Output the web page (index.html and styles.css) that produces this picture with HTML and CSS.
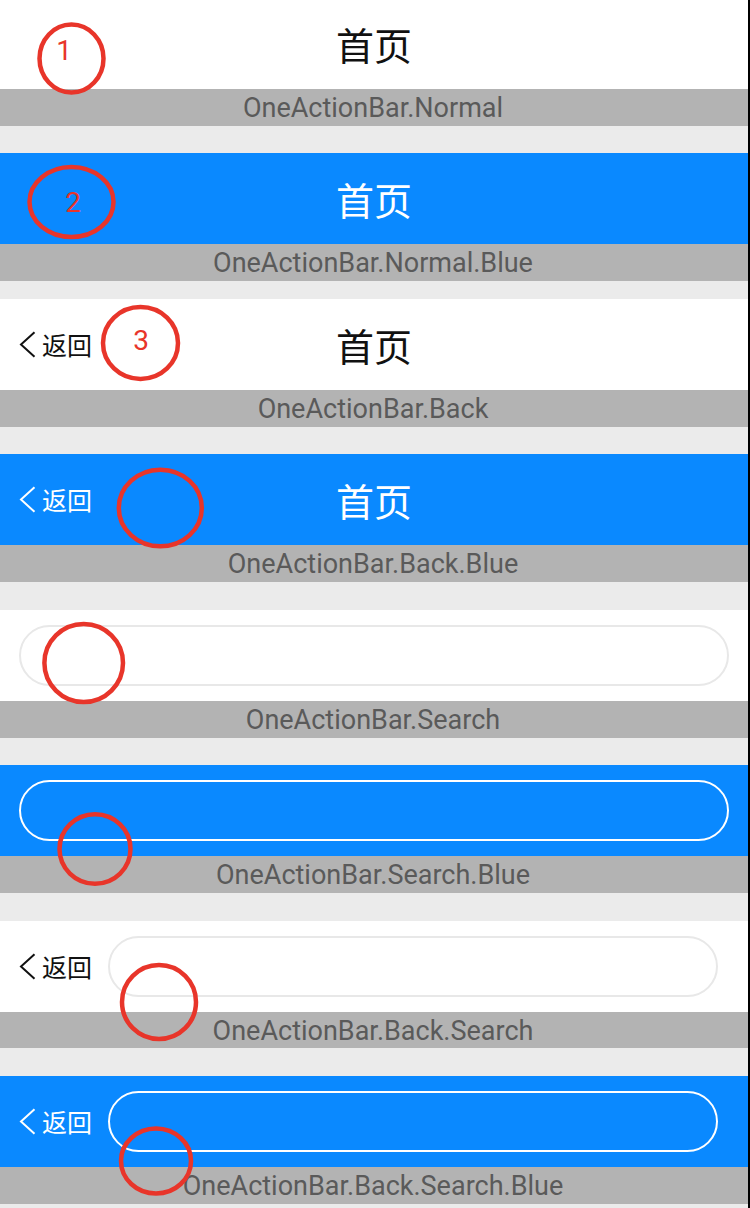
FILE: index.html
```html
<!DOCTYPE html>
<html lang="zh-CN">
<head>
<meta charset="utf-8">
<title>OneActionBar</title>
<link rel="stylesheet" href="styles.css">
</head>
<body>
<div class="page">
  <section class="demo">
    <div class="bar">
      <div class="side"></div>
      <div class="title">首页</div>
      <div class="side"></div>
    </div>
    <div class="label">OneActionBar.Normal</div>
  </section>

  <section class="demo demo--tight">
    <div class="bar bar--blue">
      <div class="side"></div>
      <div class="title">首页</div>
      <div class="side"></div>
    </div>
    <div class="label">OneActionBar.Normal.Blue</div>
  </section>

  <section class="demo">
    <div class="bar">
      <div class="side">
        <div class="back">
          <svg class="chev" width="17" height="27" viewBox="0 0 17 27"><path d="M15.5 1.2 L2 13.5 L15.5 25.8" fill="none" stroke="currentColor" stroke-width="2"/></svg>
          <span>返回</span>
        </div>
      </div>
      <div class="title">首页</div>
      <div class="side"></div>
    </div>
    <div class="label">OneActionBar.Back</div>
  </section>

  <section class="demo">
    <div class="bar bar--blue">
      <div class="side">
        <div class="back">
          <svg class="chev" width="17" height="27" viewBox="0 0 17 27"><path d="M15.5 1.2 L2 13.5 L15.5 25.8" fill="none" stroke="currentColor" stroke-width="2"/></svg>
          <span>返回</span>
        </div>
      </div>
      <div class="title">首页</div>
      <div class="side"></div>
    </div>
    <div class="label">OneActionBar.Back.Blue</div>
  </section>

  <section class="demo">
    <div class="bar bar--search">
      <div class="search"></div>
    </div>
    <div class="label">OneActionBar.Search</div>
  </section>

  <section class="demo">
    <div class="bar bar--blue bar--search">
      <div class="search"></div>
    </div>
    <div class="label">OneActionBar.Search.Blue</div>
  </section>

  <section class="demo">
    <div class="bar bar--backsearch">
      <div class="back">
        <svg class="chev" width="17" height="27" viewBox="0 0 17 27"><path d="M15.5 1.2 L2 13.5 L15.5 25.8" fill="none" stroke="currentColor" stroke-width="2"/></svg>
        <span>返回</span>
      </div>
      <div class="search"></div>
    </div>
    <div class="label">OneActionBar.Back.Search</div>
  </section>

  <section class="demo">
    <div class="bar bar--blue bar--backsearch">
      <div class="back">
        <svg class="chev" width="17" height="27" viewBox="0 0 17 27"><path d="M15.5 1.2 L2 13.5 L15.5 25.8" fill="none" stroke="currentColor" stroke-width="2"/></svg>
        <span>返回</span>
      </div>
      <div class="search"></div>
    </div>
    <div class="label">OneActionBar.Back.Search.Blue</div>
  </section>
</div>

<svg class="marks" width="750" height="1208" viewBox="0 0 750 1208">
  <g fill="none" stroke="#e8352a" stroke-width="4.5">
    <ellipse cx="71.5" cy="58.5" rx="32" ry="34"/>
    <ellipse cx="71.5" cy="202" rx="42" ry="35"/>
    <ellipse cx="140.5" cy="343" rx="37.5" ry="36"/>
    <ellipse cx="160.3" cy="508" rx="41.5" ry="38.3"/>
    <ellipse cx="83.7" cy="663" rx="39.3" ry="39"/>
    <ellipse cx="95" cy="849" rx="35.5" ry="34.7"/>
    <ellipse cx="159" cy="1002" rx="37" ry="37"/>
    <ellipse cx="156" cy="1161" rx="35" ry="32.5"/>
  </g>
  <g class="marknum" fill="#e8352a">
    <text x="64" y="60" text-anchor="middle">1</text>
    <text x="73" y="212" text-anchor="middle">2</text>
    <text x="141" y="350" text-anchor="middle">3</text>
  </g>
</svg>
</body>
</html>
```

FILE: styles.css
```css
* { box-sizing: border-box; }

html, body {
  margin: 0;
  padding: 0;
  background: #ebebeb;
}

body {
  width: 750px;
  height: 1208px;
  overflow: hidden;
  position: relative;
  font-family: Roboto, "Noto Sans", "Noto Sans CJK SC", sans-serif;
}

.page {
  width: 750px;
  min-height: 1212px;
  margin-top: -2px;
  border-right: 2px solid #000;
  display: flex;
  flex-direction: column;
}

.demo {
  display: flex;
  flex-direction: column;
  margin-bottom: 27.7px;
}

.demo--tight {
  margin-bottom: 18px;
}

.bar {
  height: 91px;
  background: #fff;
  color: #111;
  display: grid;
  grid-template-columns: 1fr auto 1fr;
  align-items: center;
}

.bar--blue {
  background: #0a89ff;
  color: #fff;
}

.title {
  font-family: "Noto Sans CJK SC", "Noto Sans", sans-serif;
  font-size: 38px;
  line-height: 1;
}

.back {
  display: flex;
  align-items: center;
  padding-left: 19px;
  gap: 6px;
  font-family: "Noto Sans CJK SC", "Noto Sans", sans-serif;
  font-size: 25px;
  line-height: 1;
}

.chev {
  display: block;
}

.bar--search {
  display: flex;
  padding: 0 19px 0 19px;
}

.bar--backsearch {
  display: flex;
  padding-right: 30px;
}

.bar--backsearch .back {
  margin-right: 16px;
}

.search {
  flex: 1;
  height: 61px;
  border: 2px solid #e8e8e8;
  border-radius: 31px;
  background: #fff;
}

.bar--blue .search {
  border-color: #fff;
  background: transparent;
}

.label {
  height: 36.7px;
  background: #b3b3b3;
  color: #5a5a5a;
  font-size: 27px;
  line-height: 38px;
  text-align: center;
  padding-right: 2px;
  white-space: nowrap;
  overflow: hidden;
}

.marks {
  position: absolute;
  top: 0;
  left: 0;
  pointer-events: none;
}

.marknum text {
  font-family: Roboto, "Noto Sans", sans-serif;
  font-size: 28px;
}
```
